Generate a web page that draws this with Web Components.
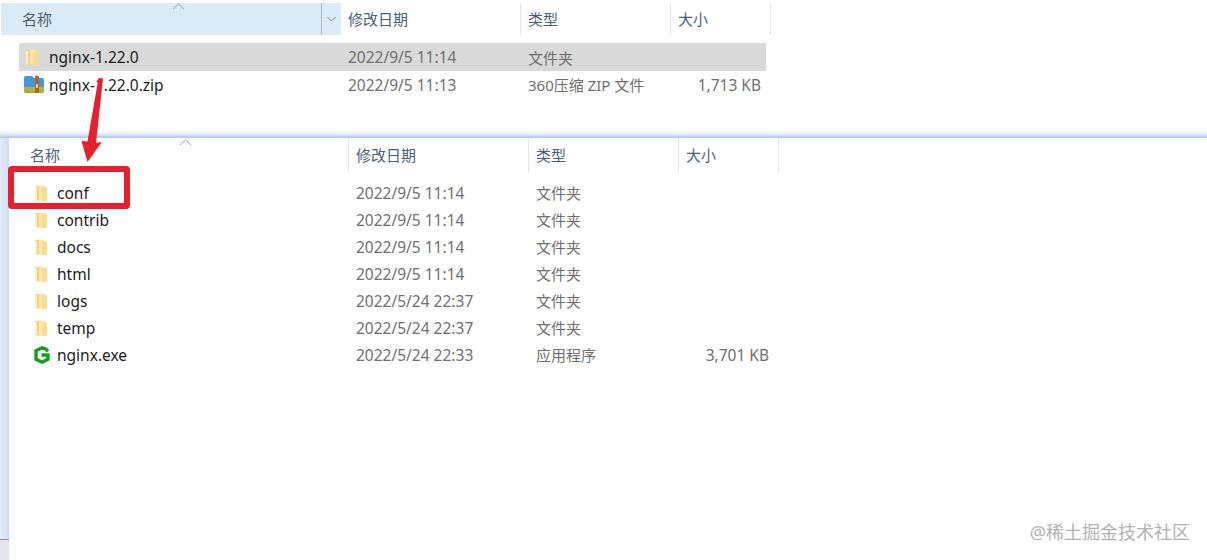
<!DOCTYPE html>
<html>
<head>
<meta charset="utf-8">
<style>
  html, body { margin: 0; background: #fff; }
  body { width: 1207px; height: 560px; overflow: hidden; position: relative; font-family: "Noto Sans", "Noto Sans CJK SC", sans-serif; }
</style>
</head>
<body>
<file-pane id="top" columns="340,180,150,100" active>
  <file-row icon="folder" name="nginx-1.22.0" date="2022/9/5 11:14" kind="文件夹" selected></file-row>
  <file-row icon="zip" name="nginx-1.22.0.zip" date="2022/9/5 11:13" kind="360压缩 ZIP 文件" size="1,713 KB"></file-row>
</file-pane>

<file-window>
  <file-pane columns="340,180,150,100">
    <file-row icon="folder" name="conf" date="2022/9/5 11:14" kind="文件夹"></file-row>
    <file-row icon="folder" name="contrib" date="2022/9/5 11:14" kind="文件夹"></file-row>
    <file-row icon="folder" name="docs" date="2022/9/5 11:14" kind="文件夹"></file-row>
    <file-row icon="folder" name="html" date="2022/9/5 11:14" kind="文件夹"></file-row>
    <file-row icon="folder" name="logs" date="2022/5/24 22:37" kind="文件夹"></file-row>
    <file-row icon="folder" name="temp" date="2022/5/24 22:37" kind="文件夹"></file-row>
    <file-row icon="exe" name="nginx.exe" date="2022/5/24 22:33" kind="应用程序" size="3,701 KB"></file-row>
  </file-pane>
</file-window>

<red-markup></red-markup>
<water-mark>@稀土掘金技术社区</water-mark>

<script>
const ICONS = {
  folder: `<svg width="16" height="18" viewBox="0 0 16 18">
    <path d="M2 2h5l1 1v13.500H2z" fill="#f3d27c"/>
    <path d="M6 1l8 2v14l-8-1z" fill="#fbe6a6"/>
    <path d="M9 3.500h5V17H9z" fill="#f8dc8e"/>
    <path d="M2 3h2v13.500H2z" fill="#fdf0c8"/>
  </svg>`,
  zip: `<svg width="22" height="20" viewBox="0 0 22 20" style="margin-left:-1px">
    <path d="M1 3q0-2 2-2h6l2 2h8q2 0 2 2v7H1z" fill="#3f9ae2"/>
    <path d="M1 12h20v4q0 2-2 2H3q-2 0-2-2z" fill="#8dbb3f"/>
    <path d="M1 12h20v2.500H1z" fill="#e3a13a"/>
    <path d="M12 1h4v17h-4z" fill="#b0662a"/>
    <path d="M13 9h2v4h-2z" fill="#f3d27a"/>
  </svg>`,
  exe: `<svg width="18" height="18" viewBox="0 0 18 18">
    <path d="M15 5.200L13 3.200 9 1.800 3 4.800v8.400l6 3 6-3V9H8.500" fill="none" stroke="#12a01c" stroke-width="3.400"/>
  </svg>`
};

class FilePane extends HTMLElement {
  connectedCallback() {
    const cols = this.getAttribute('columns').split(',');
    const active = this.hasAttribute('active');
    const root = this.attachShadow({mode: 'open'});
    const head = ['名称', '修改日期', '类型', '大小'];
    root.innerHTML = `
    <style>
      :host { display: block; width: 770px; }
      :host([active]) { margin: 3px 0 0 1px; }
      .head { display: grid; grid-template-columns: ${cols.map(c => c + 'px').join(' ')}; height: ${active ? 32 : 34}px; color: #4c607a; font-size: 15px; }
      .cell { display: flex; align-items: center; padding: 0 0 2px 7px; box-sizing: border-box; border-right: 1px solid #e5e5e5; position: relative; }
      .cell.first { padding-left: 21px; border-right: ${active ? '0' : '1px solid #e5e5e5'}; ${active ? 'background: #d9ebf9;' : ''} }
      .caret { position: absolute; top: ${active ? 0 : 1}px; left: ${active ? 171 : 170}px; }
      .drop { position: absolute; right: 0; top: 0; bottom: 0; width: 19px; border-left: 1px solid #a9bccd; display: flex; align-items: center; justify-content: center; }
      .rows { padding: ${active ? '8px 0 0 18px' : '7px 0 0 0'}; }
    </style>
    <div class="head">
      ${head.map((h, i) => `<div class="cell ${i ? '' : 'first'}">${h}${i ? '' : `
        <svg class="caret" width="13" height="7" viewBox="0 0 13 7"><path d="M1 6l5.500-5L12 6" fill="none" stroke="#9aa3ad"/></svg>
        ${active ? `<span class="drop"><svg width="9" height="6" viewBox="0 0 9 6"><path d="M.5 1l4 4 4-4" fill="none" stroke="#7d8b98"/></svg></span>` : ''}`}</div>`).join('')}
    </div>
    <div class="rows"><slot></slot></div>`;
  }
}

class FileRow extends HTMLElement {
  connectedCallback() {
    const a = n => this.getAttribute(n) || '';
    const pane = this.closest('file-pane');
    const top = pane && pane.hasAttribute('active');
    this.attachShadow({mode: 'open'}).innerHTML = `
    <style>
      :host { display: grid; grid-template-columns: ${top ? '322px 180px 150px 90px' : '340px 180px 150px 90px'}; align-items: center; height: 27px; font-size: 15.5px; }
      :host([selected]) { background: #d9d9d9; height: 28px; width: 747px; }
      .name { display: flex; align-items: center; color: #1c1c1c; padding-left: ${top ? 5 : 24}px; }
      .ico { width: ${top ? 25 : 24}px; display: flex; justify-content: flex-start; align-items: center; height: 20px; flex: none; }
      .date, .kind, .size { color: #6f6f6f; padding-left: 7px; white-space: nowrap; }
      .kind { font-size: 15px; }
      .size { padding: 0; text-align: right; }
    </style>
    <div class="name"><span class="ico">${ICONS[a('icon')]}</span>${a('name')}</div>
    <div class="date">${a('date')}</div>
    <div class="kind">${a('kind')}</div>
    <div class="size">${a('size')}</div>`;
  }
}

// second explorer window with the blue glow along its top and left edge
class FileWindow extends HTMLElement {
  constructor() {
    super();
    this.attachShadow({mode: 'open'}).innerHTML = `
    <style>
      :host { display: block; margin-top: 32px; height: 430px; padding: 8px 0 0 9px;
        background:
          linear-gradient(#fff, #fff) 9px 8px / 100% 100% no-repeat,
          linear-gradient(to bottom, #fff 0, #e6eefb 50%, #a9c3ee 100%) 0 0 / 100% 8px no-repeat,
          linear-gradient(to right, #e4ecfc, #cddcf8) 0 0 / 9px 409px no-repeat,
          linear-gradient(#8f9296 0 1px, #e3e5ea 1px) 0 409px / 9px 30px no-repeat;
      }
    </style>
    <slot></slot>`;
  }
}

class RedMarkup extends HTMLElement {
  constructor() {
    super();
    this.attachShadow({mode: 'open'}).innerHTML = `
    <style>
      :host { position: absolute; left: 0; top: 0; width: 200px; height: 220px; pointer-events: none; }
      .box { position: absolute; left: 8px; top: 166px; width: 110px; height: 31px; border: 6px solid #e81f2d; border-radius: 4px; }
      svg { position: absolute; left: 0; top: 0; }
    </style>
    <svg width="200" height="220"><path d="M98.500 78L103 78.500 96 143l6-1-14.500 20-6-21 6 .5z" fill="#e81f2d"/></svg>
    <div class="box"></div>`;
  }
}

class WaterMark extends HTMLElement {
  constructor() {
    super();
    this.attachShadow({mode: 'open'}).innerHTML = `
    <style>
      :host { position: absolute; right: 17px; top: 519px; font-size: 18px; line-height: 26px; color: #b2b2b2; white-space: nowrap; font-family: "Noto Sans", "Noto Sans CJK SC", sans-serif; }
    </style>
    <slot></slot>`;
  }
}

customElements.define('file-pane', FilePane);
customElements.define('file-row', FileRow);
customElements.define('file-window', FileWindow);
customElements.define('red-markup', RedMarkup);
customElements.define('water-mark', WaterMark);
</script>
</body>
</html>
